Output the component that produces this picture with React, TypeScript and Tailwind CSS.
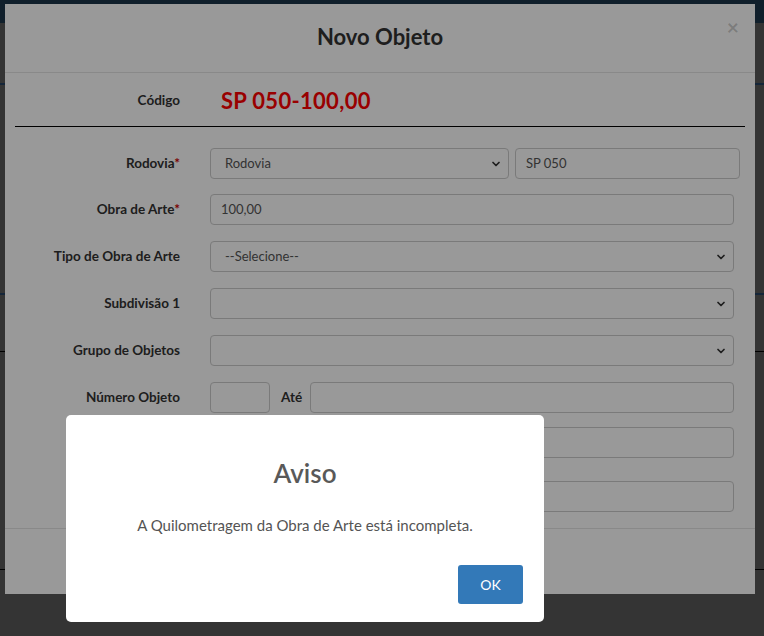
import { ChevronDown } from "lucide-react";

type FieldProps = { value?: string; className?: string };

const Select = ({ value = "", className = "" }: FieldProps) => (
  <div
    className={`flex h-[31px] items-center justify-between rounded border border-[#ccc] bg-white pl-[14px] pr-[6px] text-[13px] text-[#555] ${className}`}
  >
    <span>{value}</span>
    <ChevronDown size={12} strokeWidth={3.5} className="text-[#333]" />
  </div>
);

const Input = ({ value = "", className = "" }: FieldProps) => (
  <div
    className={`flex h-[31px] items-center rounded border border-[#ccc] bg-white pl-[10px] text-[13px] text-[#555] ${className}`}
  >
    {value}
  </div>
);

const Label = ({ text, required }: { text: string; required?: boolean }) => (
  <div className="w-[165px] shrink-0 text-right text-[13.5px] font-bold text-[#333]">
    {text}
    {required && <span className="text-[#c00]">*</span>}
  </div>
);

export default function App() {
  return (
    <div className="relative h-[636px] w-full overflow-hidden bg-[#575757] font-[Lato,sans-serif]">
      {/* page behind the modal */}
      <div className="h-[23px] bg-[#1b3548]" />
      <div className="mt-[60px] h-[2px] bg-[#223f5f]" />
      <div className="mt-[208px] h-[2px] bg-[#223f5f]" />
      <div className="mt-[56px] h-[1px] bg-black" />
      <div className="mt-[217px] h-[1px] bg-black" />

      {/* Novo Objeto modal */}
      <div className="absolute left-[5px] top-[4px] w-[750px] bg-white">
        <div className="relative flex h-[69px] items-center justify-center border-b border-[#e5e5e5] pb-[4px]">
          <h4 className="text-[22px] font-bold text-[#333]">Novo Objeto</h4>
          <span className="absolute right-[16px] top-[7px] text-[21px] font-bold text-black/20">×</span>
        </div>

        <div className="mx-[10px] flex h-[54px] items-center border-b border-black pt-[1px]">
          <Label text="Código" />
          <span className="ml-[41px] text-[22px] font-bold tracking-[0.3px] text-[#f00]">SP 050-100,00</span>
        </div>

        <div className="flex flex-col px-[10px] pb-[16px] pt-[21px]">
          <div className="flex items-center gap-[30px] pr-[5px]">
            <Label text="Rodovia" required />
            <div className="flex flex-1 gap-[6px]">
              <Select value="Rodovia" className="w-[299px]" />
              <Input value="SP 050" className="flex-1" />
            </div>
          </div>
          <div className="mt-[15px] flex items-center gap-[30px] pr-[11px]">
            <Label text="Obra de Arte" required />
            <Input value="100,00" className="flex-1" />
          </div>
          <div className="mt-[16px] flex items-center gap-[30px] pr-[11px]">
            <Label text="Tipo de Obra de Arte" />
            <Select value="--Selecione--" className="flex-1" />
          </div>
          <div className="mt-[16px] flex items-center gap-[30px] pr-[11px]">
            <Label text="Subdivisão 1" />
            <Select className="flex-1" />
          </div>
          <div className="mt-[16px] flex items-center gap-[30px] pr-[11px]">
            <Label text="Grupo de Objetos" />
            <Select className="flex-1" />
          </div>
          <div className="mt-[16px] flex items-center gap-[30px] pr-[11px]">
            <Label text="Número Objeto" />
            <div className="flex flex-1 items-center">
              <Input className="w-[60px]" />
              <span className="ml-[11px] mr-[8px] text-[13.5px] font-bold text-[#333]">Até</span>
              <Input className="flex-1" />
            </div>
          </div>
          <div className="mt-[14px] flex items-center gap-[30px] pr-[11px]">
            <div className="w-[165px] shrink-0" />
            <Input className="flex-1" />
          </div>
          <div className="mt-[23px] flex items-center gap-[30px] pr-[11px]">
            <div className="w-[165px] shrink-0" />
            <Input className="flex-1" />
          </div>
        </div>

        <div className="h-[66px] border-t border-[#e5e5e5]" />
      </div>

      {/* alert overlay */}
      <div className="absolute inset-0 bg-black/40" />

      <div className="absolute left-[66px] top-[415px] flex h-[207px] w-[478px] flex-col items-center rounded-[5px] bg-white">
        <h2 className="mt-[42px] text-[26px] font-semibold leading-[32px] text-[#595959]">Aviso</h2>
        <p className="mt-[26px] text-[15px] leading-[20px] text-[#545454]">
          A Quilometragem da Obra de Arte está incompleta.
        </p>
        <button className="mr-[21px] mt-[30px] h-[39px] w-[65px] self-end rounded-[3px] bg-[#3379b8] text-[14px] text-white">
          OK
        </button>
      </div>
    </div>
  );
}
